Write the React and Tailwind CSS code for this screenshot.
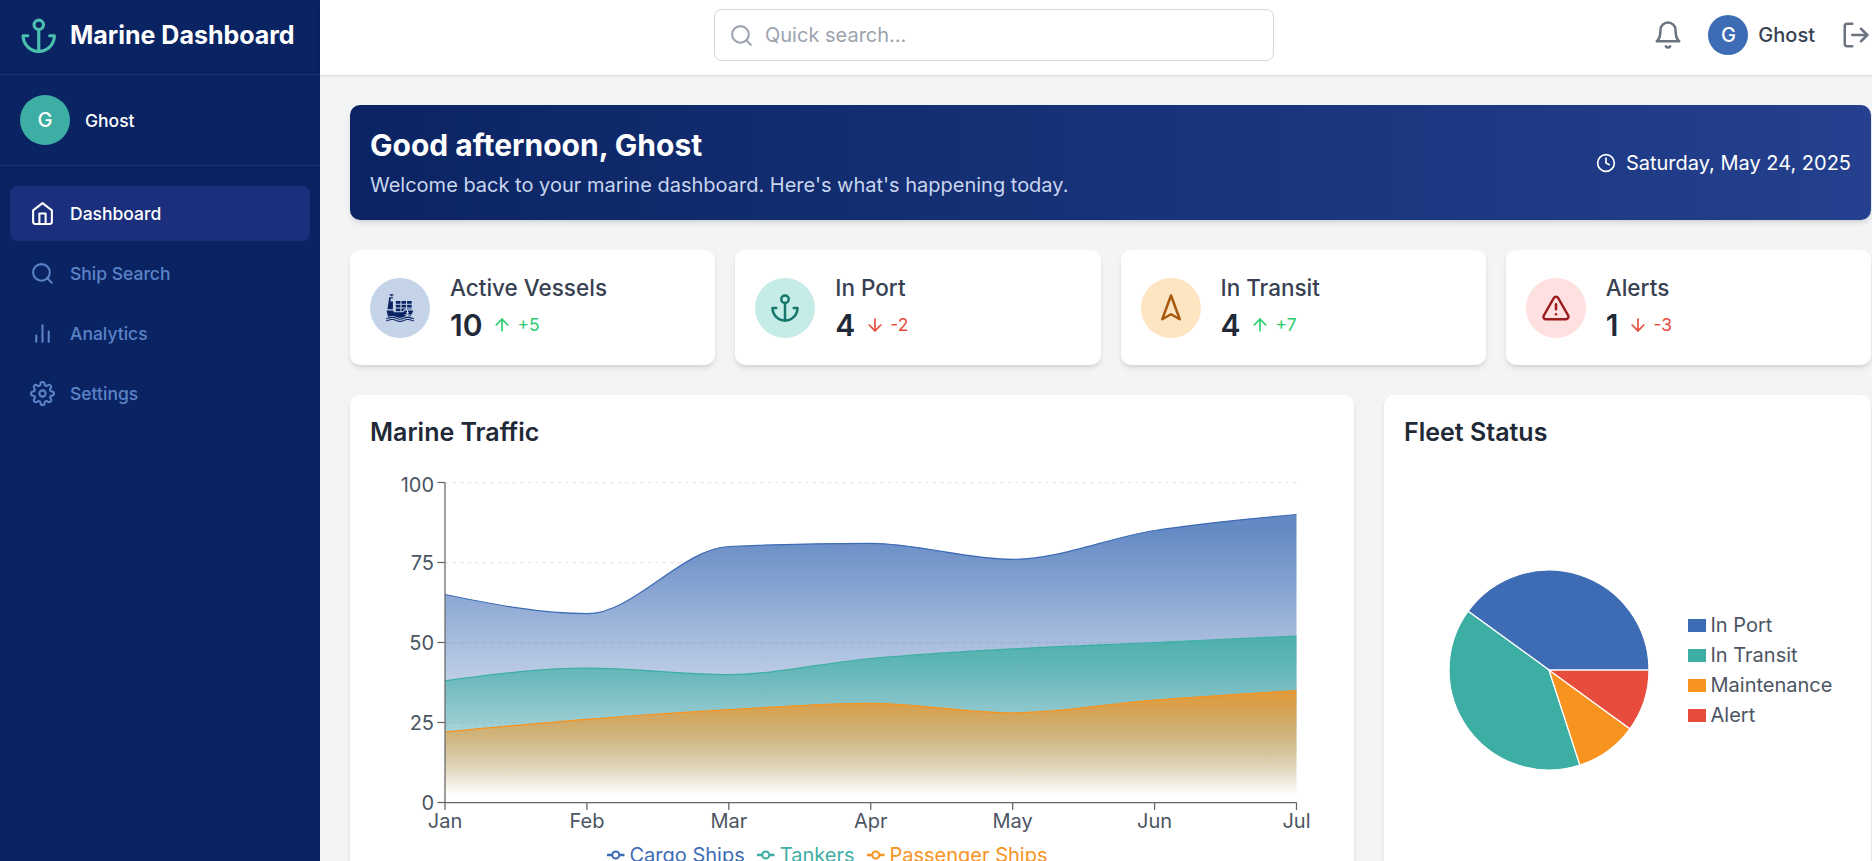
import { ArrowDown, ArrowUp, Clock, LogOut, Navigation2, Search, TriangleAlert } from 'lucide-react';
import { GiCargoShip } from 'react-icons/gi';

// Older stroke icons, the current lucide versions are drawn differently
function StrokeIcon({ size = 24, className, children }) {
  return (
    <svg width={size} height={size} viewBox="0 0 24 24" fill="none" stroke="currentColor" strokeWidth="2" strokeLinecap="round" strokeLinejoin="round" className={className}>
      {children}
    </svg>
  );
}
const Anchor = (props) => (
  <StrokeIcon {...props}>
    <circle cx="12" cy="5" r="3" />
    <path d="M12 22V8" />
    <path d="M5 12H2a10 10 0 0 0 20 0h-3" />
  </StrokeIcon>
);
const House = (props) => (
  <StrokeIcon {...props}>
    <path d="M3 9l9-7 9 7v11a2 2 0 0 1-2 2H5a2 2 0 0 1-2-2z" />
    <path d="M9 22V12h6v10" />
  </StrokeIcon>
);
const BarChart = (props) => (
  <StrokeIcon {...props}>
    <path d="M18 20V10" />
    <path d="M12 20V4" />
    <path d="M6 20v-6" />
  </StrokeIcon>
);
const Gear = (props) => (
  <StrokeIcon {...props}>
    <circle cx="12" cy="12" r="3" />
    <path d="M19.4 15a1.65 1.65 0 0 0 .33 1.82l.06.06a2 2 0 0 1 0 2.83 2 2 0 0 1-2.83 0l-.06-.06a1.65 1.65 0 0 0-1.82-.33 1.65 1.65 0 0 0-1 1.51V21a2 2 0 0 1-2 2 2 2 0 0 1-2-2v-.09A1.65 1.65 0 0 0 9 19.4a1.65 1.65 0 0 0-1.82.33l-.06.06a2 2 0 0 1-2.83 0 2 2 0 0 1 0-2.83l.06-.06a1.65 1.65 0 0 0 .33-1.82 1.65 1.65 0 0 0-1.51-1H3a2 2 0 0 1-2-2 2 2 0 0 1 2-2h.09A1.65 1.65 0 0 0 4.6 9a1.65 1.65 0 0 0-.33-1.82l-.06-.06a2 2 0 0 1 0-2.83 2 2 0 0 1 2.83 0l.06.06a1.65 1.65 0 0 0 1.82.33H9a1.65 1.65 0 0 0 1-1.51V3a2 2 0 0 1 2-2 2 2 0 0 1 2 2v.09a1.65 1.65 0 0 0 1 1.51 1.65 1.65 0 0 0 1.82-.33l.06-.06a2 2 0 0 1 2.83 0 2 2 0 0 1 0 2.83l-.06.06a1.65 1.65 0 0 0-.33 1.82V9a1.65 1.65 0 0 0 1.51 1H21a2 2 0 0 1 2 2 2 2 0 0 1-2 2h-.09a1.65 1.65 0 0 0-1.51 1z" />
  </StrokeIcon>
);
const Bell = (props) => (
  <StrokeIcon {...props}>
    <path d="M18 8A6 6 0 0 0 6 8c0 7-3 9-3 9h18s-3-2-3-9" />
    <path d="M13.73 21a2 2 0 0 1-3.46 0" />
  </StrokeIcon>
);

const NAV = [
  { label: 'Dashboard', icon: House, active: true },
  { label: 'Ship Search', icon: Search },
  { label: 'Analytics', icon: BarChart },
  { label: 'Settings', icon: Gear },
];

const STATS = [
  { label: 'Active Vessels', value: 10, delta: '+5', up: true, icon: GiCargoShip, circle: 'bg-[#c5d3e9]', tint: 'text-[#0a2463]' },
  { label: 'In Port', value: 4, delta: '-2', up: false, icon: Anchor, circle: 'bg-[#c6ece8]', tint: 'text-[#17766c]' },
  { label: 'In Transit', value: 4, delta: '+7', up: true, icon: Navigation2, circle: 'bg-[#fde5c2]', tint: 'text-[#a8590f]' },
  { label: 'Alerts', value: 1, delta: '-3', up: false, icon: TriangleAlert, circle: 'bg-[#fee0e0]', tint: 'text-[#991b1b]' },
];

// ── Chart data ───────────────────────────────────────
const MONTHS = ['Jan', 'Feb', 'Mar', 'Apr', 'May', 'Jun', 'Jul'];
const SERIES = [
  { id: 'cargo', name: 'Cargo Ships', color: '#3d6cb5', text: 'text-[#3d6cb5]', values: [65, 59, 80, 81, 76, 85, 90] },
  { id: 'tankers', name: 'Tankers', color: '#3caea3', text: 'text-[#3caea3]', values: [38, 42, 40, 45, 48, 50, 52] },
  { id: 'passenger', name: 'Passenger Ships', color: '#f7931e', text: 'text-[#f7931e]', values: [22, 26, 29, 31, 28, 32, 35] },
];
const PIE = [
  { name: 'In Port', value: 4, color: '#3d6cb5', swatch: 'bg-[#3d6cb5]' },
  { name: 'In Transit', value: 4, color: '#3caea3', swatch: 'bg-[#3caea3]' },
  { name: 'Maintenance', value: 1, color: '#f7931e', swatch: 'bg-[#f7931e]' },
  { name: 'Alert', value: 1, color: '#e74c3c', swatch: 'bg-[#e74c3c]' },
];

const LEFT = 75;
const RIGHT = 926.5;
const TOP = 12.5;
const BOTTOM = 332.5;
const xAt = (i) => LEFT + (i * (RIGHT - LEFT)) / 6;
const yAt = (v) => BOTTOM - (v * (BOTTOM - TOP)) / 100;

// Monotone cubic through the points, same maths as a monotoneX curve
function monotonePath(values) {
  const pts = values.map((v, i) => [xAt(i), yAt(v)]);
  const h = pts[1][0] - pts[0][0];
  const s = pts.slice(1).map((p, i) => (p[1] - pts[i][1]) / h);
  const t = pts.map(() => 0);
  for (let i = 1; i < pts.length - 1; i++) {
    const p = (s[i - 1] + s[i]) / 2;
    t[i] = (Math.sign(s[i - 1]) + Math.sign(s[i])) * Math.min(Math.abs(s[i - 1]), Math.abs(s[i]), 0.5 * Math.abs(p)) || 0;
  }
  t[0] = (3 * s[0] - t[1]) / 2;
  t[pts.length - 1] = (3 * s[s.length - 1] - t[pts.length - 2]) / 2;
  const dx = h / 3;
  let d = `M${pts[0][0]},${pts[0][1]}`;
  for (let i = 0; i < pts.length - 1; i++) {
    d += `C${pts[i][0] + dx},${pts[i][1] + dx * t[i]} ${pts[i + 1][0] - dx},${pts[i + 1][1] - dx * t[i + 1]} ${pts[i + 1][0]},${pts[i + 1][1]}`;
  }
  return d;
}

function TrafficChart() {
  return (
    <svg width="964" height="370" className="block">
      <defs>
        {SERIES.map((s) => (
          <linearGradient key={s.id} id={s.id} x1="0" y1="0" x2="0" y2="1">
            <stop offset="5%" stopColor={s.color} stopOpacity="0.8" />
            <stop offset="95%" stopColor={s.color} stopOpacity="0" />
          </linearGradient>
        ))}
      </defs>
      {[100, 75, 50, 25].map((v) => (
        <line key={v} x1={LEFT} x2={RIGHT} y1={yAt(v)} y2={yAt(v)} stroke="#e5e7eb" strokeWidth="1.25" strokeDasharray="3.75 3.75" />
      ))}
      {SERIES.map((s) => {
        const line = monotonePath(s.values);
        return (
          <g key={s.id}>
            <path d={`${line}L${RIGHT},${BOTTOM}L${LEFT},${BOTTOM}Z`} fill={`url(#${s.id})`} />
            <path d={line} fill="none" stroke={s.color} strokeWidth="1.25" />
          </g>
        );
      })}
      <line x1={LEFT} x2={LEFT} y1={TOP} y2={BOTTOM} stroke="#666" strokeWidth="1.25" />
      <line x1={LEFT} x2={RIGHT} y1={BOTTOM} y2={BOTTOM} stroke="#666" strokeWidth="1.25" />
      {[0, 25, 50, 75, 100].map((v) => (
        <g key={v}>
          <line x1={LEFT - 7.5} x2={LEFT} y1={yAt(v)} y2={yAt(v)} stroke="#666" strokeWidth="1.25" />
          <text x={LEFT - 11} y={yAt(v) + (v === 100 ? 9 : 7)} textAnchor="end" fontSize="20" fill="#4b5563">{v}</text>
        </g>
      ))}
      {MONTHS.map((m, i) => (
        <g key={m}>
          <line x1={xAt(i)} x2={xAt(i)} y1={BOTTOM} y2={BOTTOM + 7.5} stroke="#666" strokeWidth="1.25" />
          <text x={xAt(i)} y={BOTTOM + 25} textAnchor="middle" fontSize="20" fill="#4b5563">{m}</text>
        </g>
      ))}
    </svg>
  );
}

function FleetPie() {
  const total = PIE.reduce((sum, p) => sum + p.value, 0);
  let angle = 0;
  return (
    <svg width="200" height="200" viewBox="-100 -100 200 200" className="block shrink-0">
      {PIE.map((p) => {
        const a0 = angle;
        angle += (p.value / total) * Math.PI * 2;
        const x0 = 100 * Math.cos(a0);
        const y0 = -100 * Math.sin(a0);
        const x1 = 100 * Math.cos(angle);
        const y1 = -100 * Math.sin(angle);
        const large = angle - a0 > Math.PI ? 1 : 0;
        return <path key={p.name} d={`M0,0L${x0},${y0}A100,100 0 ${large} 0 ${x1},${y1}Z`} fill={p.color} stroke="#fff" strokeWidth="1.25" />;
      })}
    </svg>
  );
}

function Sidebar() {
  return (
    <aside className="w-[320px] shrink-0 h-full bg-[#0a2463] text-white">
      <div className="h-[75px] flex items-center gap-[12.5px] px-5 pb-[3px] border-b border-[#1a327a]">
        <Anchor size={37.5} className="text-[#4cc0ae] shrink-0" />
        <span className="text-[25px] font-bold whitespace-nowrap">Marine Dashboard</span>
      </div>
      <div className="h-[91px] flex items-center gap-[15px] px-5 border-b border-[#1a327a]">
        <div className="w-[50px] h-[50px] rounded-full bg-[#3caea3] flex items-center justify-center text-[20px] font-medium">G</div>
        <span className="text-[17.5px] font-medium pt-[2px]">Ghost</span>
      </div>
      <nav className="flex flex-col gap-[5px] px-[10px] pt-5">
        {NAV.map(({ label, icon: Icon, active }) => (
          <div
            key={label}
            className={`h-[55px] flex items-center gap-[15px] px-5 rounded-[7.5px] text-[17.5px] font-medium ${active ? 'bg-[#1b2f7c] text-white' : 'text-[#5b82c6]'}`}
          >
            <Icon size={25} />
            <span className="pt-px">{label}</span>
          </div>
        ))}
      </nav>
    </aside>
  );
}

function Header() {
  return (
    <header className="h-[75px] shrink-0 bg-white shadow-sm flex items-center pr-[1px] pb-[5px] relative">
      <div className="ml-[394px] w-[560px] h-[52px] flex items-center gap-[11px] pl-[14px] border border-[#d1d5db] rounded-[7.5px]">
        <Search size={25} className="text-[#9ca3af]" />
        <span className="text-[20px] text-[#9ca3af]">Quick search...</span>
      </div>
      <div className="ml-auto flex items-center">
        <Bell size={30} className="text-[#6b7280]" />
        <div className="ml-[25px] w-10 h-10 rounded-full bg-[#3d6cb5] text-white flex items-center justify-center text-[20px] font-medium">G</div>
        <span className="ml-[10px] text-[20px] font-medium text-[#374151]">Ghost</span>
        <LogOut size={30} className="ml-[26px] text-[#6b7280]" />
      </div>
    </header>
  );
}

function StatCard({ label, value, delta, up, icon: Icon, circle, tint }) {
  const Arrow = up ? ArrowUp : ArrowDown;
  return (
    <div className="h-[115px] bg-white rounded-[10px] shadow-md flex items-center gap-5 px-5">
      <div className={`w-[60px] h-[60px] rounded-full flex items-center justify-center ${circle} ${tint}`}>
        <Icon size={30} />
      </div>
      <div>
        <div className="text-[22.5px] leading-[35px] font-medium text-[#374151]">{label}</div>
        <div className="flex items-center">
          <span className="text-[30px] leading-[40px] font-semibold text-[#1f2937]">{value}</span>
          <span className={`ml-[10px] flex items-center gap-[5px] text-[17.5px] ${up ? 'text-[#2ecc71]' : 'text-[#e74c3c]'}`}>
            <Arrow size={20} />
            {delta}
          </span>
        </div>
      </div>
    </div>
  );
}

export default function App() {
  return (
    <div className="flex h-screen overflow-hidden bg-[#f3f4f6] font-[family-name:Inter,sans-serif]">
      <Sidebar />
      <div className="flex-1 min-w-0 flex flex-col">
        <Header />
        <main className="pl-[30px] pr-[1px] pt-[30px]">
          <section className="h-[115px] rounded-[10px] bg-gradient-to-r from-[#0a2463] to-[#24408e] text-white px-5 flex items-center justify-between shadow-md">
            <div>
              <h1 className="text-[30px] leading-[40px] font-bold">Good afternoon, Ghost</h1>
              <p className="mt-[5px] text-[20px] leading-[30px] text-[#c9d6ee]">Welcome back to your marine dashboard. Here's what's happening today.</p>
            </div>
            <div className="flex items-center gap-[10px] text-[20px]">
              <Clock size={20} />
              Saturday, May 24, 2025
            </div>
          </section>

          <section className="mt-[30px] grid grid-cols-4 gap-5">
            {STATS.map((s) => <StatCard key={s.label} {...s} />)}
          </section>

          <section className="mt-[30px] grid grid-cols-[1004px_487px] gap-[30px]">
            <div className="bg-white rounded-[10px] shadow-md p-5">
              <h2 className="text-[25px] leading-[35px] font-semibold text-[#1f2937]">Marine Traffic</h2>
              <div className="mt-5">
                <TrafficChart />
                <div className="ml-[237px] flex items-center gap-[12.5px] text-[20px] leading-[30px]">
                  {SERIES.map((s) => (
                    <div key={s.id} className={`flex items-center gap-[5px] ${s.text}`}>
                      <svg width="17.5" height="12" viewBox="0 0 17.5 12">
                        <line x1="0" x2="17.5" y1="6" y2="6" stroke={s.color} strokeWidth="2.5" />
                        <circle cx="8.75" cy="6" r="3.5" fill="#fff" stroke={s.color} strokeWidth="2" />
                      </svg>
                      {s.name}
                    </div>
                  ))}
                </div>
              </div>
            </div>
            <div className="bg-white rounded-[10px] shadow-md p-5">
              <h2 className="text-[25px] leading-[35px] font-semibold text-[#1f2937]">Fleet Status</h2>
              <div className="mt-5 h-[400px] pl-[45px] flex items-center gap-[39px]">
                <FleetPie />
                <ul className="text-[20px] leading-[30px] text-[#4b5563]">
                  {PIE.map((p) => (
                    <li key={p.name} className="flex items-center gap-[5px]">
                      <span className={`w-[17.5px] h-[13px] ${p.swatch}`} />
                      {p.name}
                    </li>
                  ))}
                </ul>
              </div>
            </div>
          </section>
        </main>
      </div>
    </div>
  );
}
